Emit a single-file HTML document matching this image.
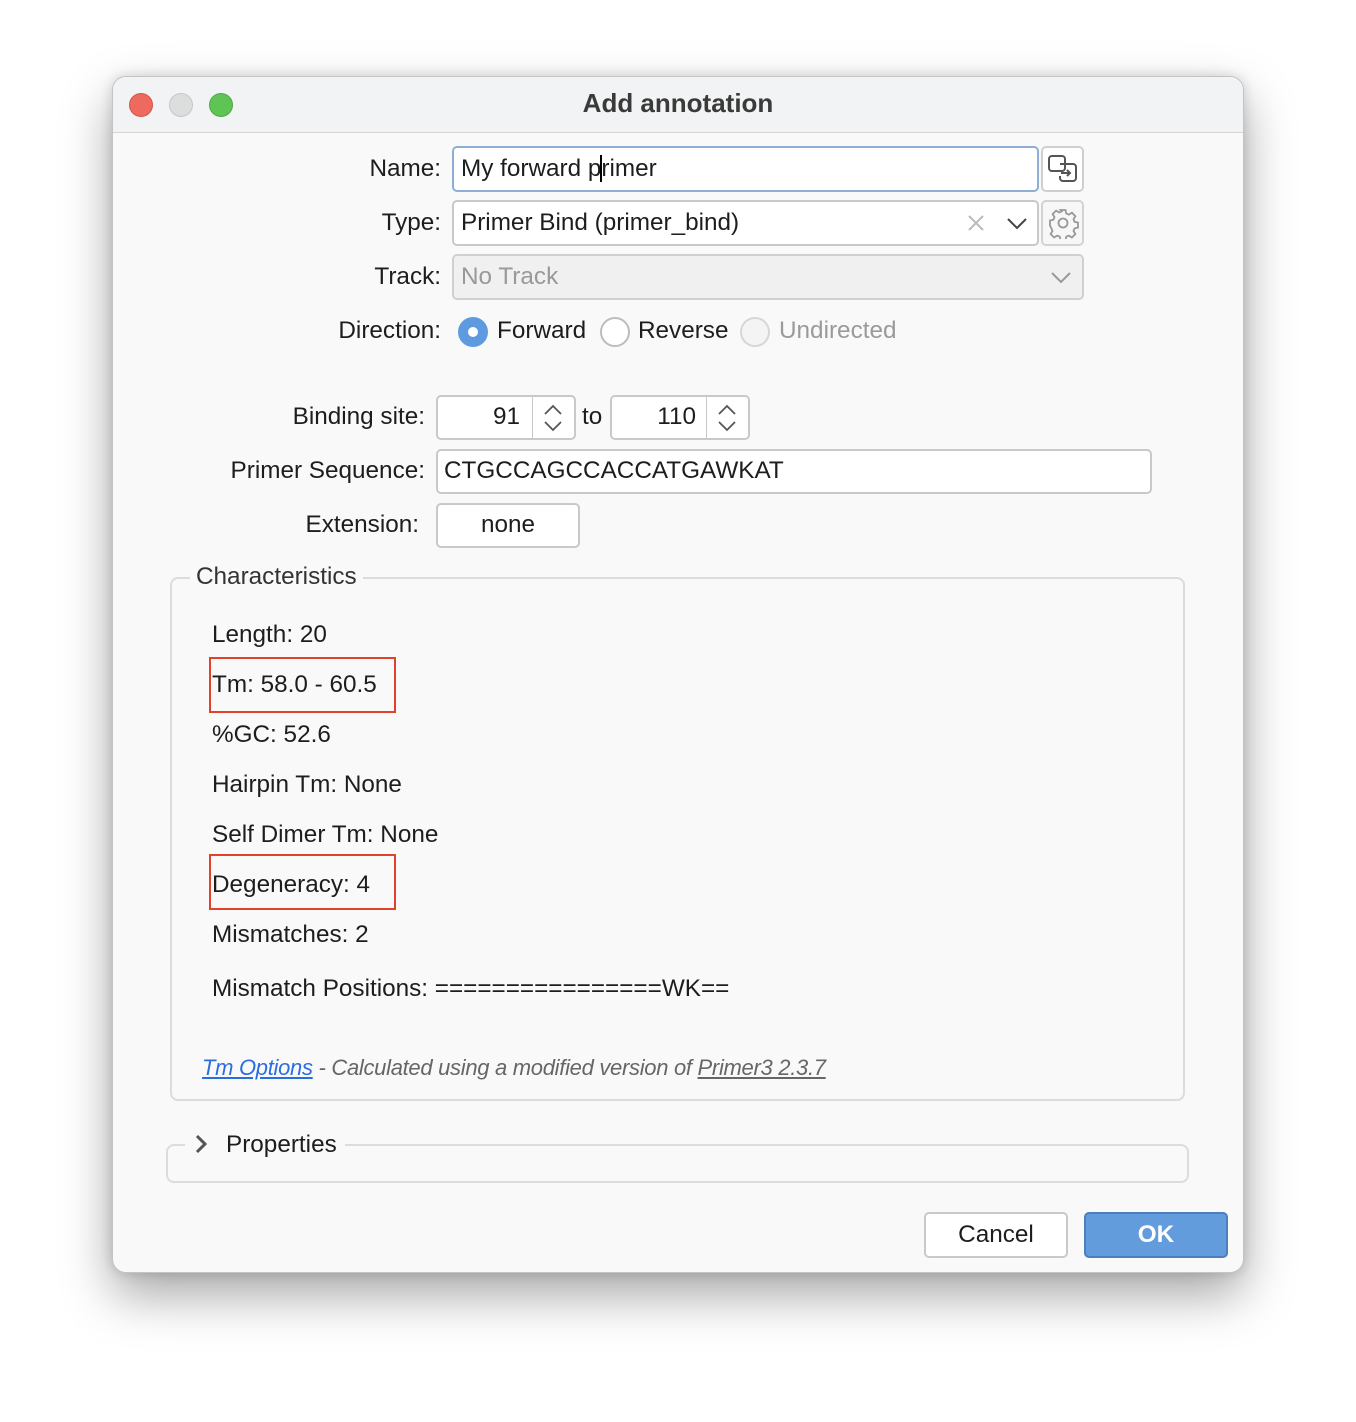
<!DOCTYPE html>
<html><head><meta charset="utf-8"><style>
*{box-sizing:border-box;margin:0;padding:0}
body{width:1356px;height:1422px;background:#fff;position:relative;overflow:hidden;font-family:"Liberation Sans",sans-serif;color:#1d1d1d}
.win{position:absolute;left:112px;top:76px;width:1132px;height:1197px;background:#f9f9f9;border-radius:14px;border:1px solid #c4c4c4;box-shadow:0 22px 50px rgba(0,0,0,.35),0 0 12px rgba(0,0,0,.15);overflow:hidden}
.tb{position:absolute;left:0;top:0;width:100%;height:56px;background:#f2f3f4;border-bottom:1px solid #d5d5d5}
.dot{position:absolute;top:16px;width:24px;height:24px;border-radius:50%}
.t{position:absolute;font-size:24.3px;line-height:30px;white-space:nowrap}
.r{text-align:right}
.box{position:absolute;background:#fff;border:2px solid #c9c9c9;border-radius:5px}
.hl{position:absolute;border:2px solid #e2422b}
</style></head><body>
<div class="win">
<div class="tb"></div>
<div class="dot" style="left:16px;background:#ee6a5e;border:1px solid #d5554a"></div>
<div class="dot" style="left:56px;background:#dcdddd;border:1px solid #c6c6c6"></div>
<div class="dot" style="left:96px;background:#5ec454;border:1px solid #4ea945"></div>
<div class="t" style="left:0;width:1130px;text-align:center;top:11px;font-weight:bold;font-size:26px;color:#3a3a3a">Add annotation</div>
</div>

<div class="t r" style="left:200px;width:241px;top:154px">Name:</div>
<div class="box" style="left:452px;top:146px;width:587px;height:46px;border-color:#8eaed6"></div>
<div class="t" style="left:461px;top:154px">My forward p<span style="border-left:2px solid #000;margin:0 -1px"></span>rimer</div>
<div class="box" style="left:1041px;top:146px;width:43px;height:46px;border-color:#cfcfcf"></div>
<svg style="position:absolute;left:1046px;top:152px" width="34" height="34" viewBox="0 0 34 34" fill="none" stroke="#555" stroke-width="2"><rect x="3" y="4" width="16" height="15" rx="3"/><path d="M14 12h13a3 3 0 0 1 3 3v11a3 3 0 0 1-3 3H17a3 3 0 0 1-3-3v-2"/><path d="M15 21h9M21 18l3 3-3 3"/></svg>

<div class="t r" style="left:200px;width:241px;top:208px">Type:</div>
<div class="box" style="left:452px;top:200px;width:587px;height:46px"></div>
<div class="t" style="left:461px;top:208px">Primer Bind (primer_bind)</div>
<svg style="position:absolute;left:966px;top:213px" width="20" height="20"><path d="M3 3l14 14M17 3L3 17" stroke="#bbb" stroke-width="2"/></svg>
<svg style="position:absolute;left:1005px;top:213px" width="24" height="20"><path d="M3 6l9 9 9-9" stroke="#444" stroke-width="2" fill="none"/></svg>
<div class="box" style="left:1041px;top:200px;width:43px;height:46px;border-color:#d3d3d3;background:#f7f7f7"></div>
<svg style="position:absolute;left:1047px;top:207px" width="32" height="32" viewBox="0 0 32 32" fill="none" stroke="#999" stroke-width="1.8"><path d="M13.5 3h5l.8 3.5 2.6 1.1 3-1.9 3.5 3.5-1.9 3 1.1 2.6 3.4.8v5l-3.4.8-1.1 2.6 1.9 3-3.5 3.5-3-1.9-2.6 1.1-.8 3.4h-5l-.8-3.4-2.6-1.1-3 1.9-3.5-3.5 1.9-3-1.1-2.6L3 18.5v-5l3.4-.8 1.1-2.6-1.9-3 3.5-3.5 3 1.9 2.6-1.1z"/><circle cx="16" cy="16" r="4.5"/></svg>

<div class="t r" style="left:200px;width:241px;top:262px">Track:</div>
<div class="box" style="left:452px;top:254px;width:632px;height:46px;background:#f0f0f0;border-color:#d0d0d0"></div>
<div class="t" style="left:461px;top:262px;color:#999">No Track</div>
<svg style="position:absolute;left:1049px;top:267px" width="24" height="20"><path d="M3 6l9 9 9-9" stroke="#999" stroke-width="2" fill="none"/></svg>

<div class="t r" style="left:200px;width:241px;top:316px">Direction:</div>
<div style="position:absolute;left:458px;top:317px;width:30px;height:30px;border-radius:50%;background:#5e9ae0"><div style="position:absolute;left:10px;top:10px;width:10px;height:10px;border-radius:50%;background:#fff"></div></div>
<div class="t" style="left:497px;top:316px">Forward</div>
<div style="position:absolute;left:600px;top:317px;width:30px;height:30px;border-radius:50%;background:#fff;border:2px solid #bdbdbd"></div>
<div class="t" style="left:638px;top:316px">Reverse</div>
<div style="position:absolute;left:740px;top:317px;width:30px;height:30px;border-radius:50%;background:#f4f4f4;border:2px solid #d6d6d6"></div>
<div class="t" style="left:779px;top:316px;color:#9a9a9a">Undirected</div>

<div class="t r" style="left:200px;width:225px;top:402px">Binding site:</div>
<div class="box" style="left:436px;top:395px;width:140px;height:45px"></div>
<div style="position:absolute;left:532px;top:397px;width:1px;height:41px;background:#c9c9c9"></div>
<div class="t r" style="left:440px;width:80px;top:402px">91</div>
<svg style="position:absolute;left:541px;top:401px" width="24" height="34"><path d="M4 13l8-8 8 8M4 21l8 8 8-8" stroke="#555" stroke-width="1.8" fill="none"/></svg>
<div class="t" style="left:582px;top:402px">to</div>
<div class="box" style="left:610px;top:395px;width:140px;height:45px"></div>
<div style="position:absolute;left:706px;top:397px;width:1px;height:41px;background:#c9c9c9"></div>
<div class="t r" style="left:614px;width:82px;top:402px">110</div>
<svg style="position:absolute;left:715px;top:401px" width="24" height="34"><path d="M4 13l8-8 8 8M4 21l8 8 8-8" stroke="#555" stroke-width="1.8" fill="none"/></svg>

<div class="t r" style="left:200px;width:225px;top:456px">Primer Sequence:</div>
<div class="box" style="left:436px;top:449px;width:716px;height:45px"></div>
<div class="t" style="left:444px;top:456px">CTGCCAGCCACCATGAWKAT</div>

<div class="t r" style="left:200px;width:219px;top:510px">Extension:</div>
<div class="box" style="left:436px;top:503px;width:144px;height:45px"></div>
<div class="t" style="left:436px;width:144px;text-align:center;top:510px">none</div>

<div style="position:absolute;left:170px;top:577px;width:1015px;height:524px;border:2px solid #dcdcdc;border-radius:8px"></div>
<div class="t" style="left:190px;top:562px;background:#f9f9f9;padding:0 6px;color:#333">Characteristics</div>
<div class="t" style="left:212px;top:620px">Length: 20</div>
<div class="t" style="left:212px;top:670px">Tm: 58.0 - 60.5</div>
<div class="hl" style="left:209px;top:657px;width:187px;height:56px"></div>
<div class="t" style="left:212px;top:720px">%GC: 52.6</div>
<div class="t" style="left:212px;top:770px">Hairpin Tm: None</div>
<div class="t" style="left:212px;top:820px">Self Dimer Tm: None</div>
<div class="t" style="left:212px;top:870px">Degeneracy: 4</div>
<div class="hl" style="left:209px;top:854px;width:187px;height:56px"></div>
<div class="t" style="left:212px;top:920px">Mismatches: 2</div>
<div class="t" style="left:212px;top:974px">Mismatch Positions: ================WK==</div>
<div class="t" style="left:202px;top:1053px;font-style:italic;font-size:22px;letter-spacing:-0.3px;color:#666"><span style="color:#2a6de0;text-decoration:underline">Tm Options</span> - Calculated using a modified version of <span style="text-decoration:underline">Primer3 2.3.7</span></div>

<div style="position:absolute;left:166px;top:1144px;width:1023px;height:39px;border:2px solid #dcdcdc;border-radius:8px"></div>
<div style="position:absolute;left:185px;top:1130px;width:160px;height:30px;background:#f9f9f9"></div>
<svg style="position:absolute;left:192px;top:1133px" width="18" height="22"><path d="M5 3l8 8-8 8" stroke="#555" stroke-width="3" fill="none"/></svg>
<div class="t" style="left:226px;top:1130px">Properties</div>

<div class="box" style="left:924px;top:1212px;width:144px;height:46px"></div>
<div class="t" style="left:924px;width:144px;text-align:center;top:1220px">Cancel</div>
<div class="box" style="left:1084px;top:1212px;width:144px;height:46px;background:#629cdc;border-color:#4d7fbf"></div>
<div class="t" style="left:1084px;width:144px;text-align:center;top:1220px;color:#fff;font-weight:bold">OK</div>
</body></html>
